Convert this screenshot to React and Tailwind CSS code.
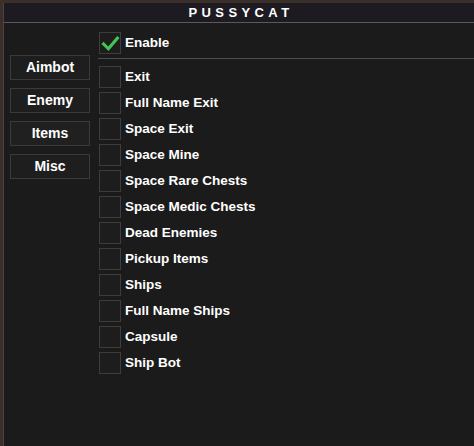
import React, { useState } from 'react';

const items = [
    'Exit',
    'Full Name Exit',
    'Space Exit',
    'Space Mine',
    'Space Rare Chests',
    'Space Medic Chests',
    'Dead Enemies',
    'Pickup Items',
    'Ships',
    'Full Name Ships',
    'Capsule',
    'Ship Bot',
];

const tabs = ['Aimbot', 'Enemy', 'Items', 'Misc'];

const Check = () => (
    <svg width="19" height="19" viewBox="0 0 18 18" fill="none">
        <path d="M2.5 9.5 L7 14 L15.5 4" stroke="#43c450" strokeWidth="3" strokeLinecap="square" />
    </svg>
);

const Box = ({ checked, onClick }) => (
    <button
        onClick={onClick}
        className="flex h-[22px] w-[22px] shrink-0 items-center justify-center border border-[#3d3d3d] bg-[#1d1d1d]"
    >
        {checked && <Check />}
    </button>
);

const App = () => {
    const [enabled, setEnabled] = useState(true);
    const [checked, setChecked] = useState({});
    const [tab, setTab] = useState('Items');

    return (
        <div
            className="h-[446px] w-[474px] overflow-hidden bg-[#3a3029] pl-[3px] pt-[3px]"
            style={{ fontFamily: '"Liberation Sans", Arial, sans-serif' }}
        >
            <div className="flex h-full flex-col border-l border-[#4a4440] bg-[#1b1b1b]">
                {/* title bar */}
                <div className="flex h-[20px] items-center justify-center border-b border-[#5a5a5a] bg-[#1e1a21]">
                    <span className="pl-[4px] text-[13px] font-bold tracking-[4.4px] text-white">PUSSYCAT</span>
                </div>

                <div className="flex flex-1">
                    {/* tabs */}
                    <div className="flex w-[94px] flex-col gap-[8px] pl-[6px] pt-[32px]">
                        {tabs.map((t) => (
                            <button
                                key={t}
                                onClick={() => setTab(t)}
                                className={`h-[25px] w-[80px] border border-[#3a3a3a] text-[14px] font-bold text-white ${
                                    tab === t ? 'bg-[#202020]' : 'bg-[#1e1e1e]'
                                }`}
                            >
                                {t}
                            </button>
                        ))}
                    </div>

                    {/* options */}
                    <div className="flex flex-1 flex-col pt-[9px]">
                        <div className="flex items-center gap-[4px] pl-[1px]">
                            <Box checked={enabled} onClick={() => setEnabled(!enabled)} />
                            <span className="text-[13.5px] font-bold text-white">Enable</span>
                        </div>
                        <div className="mt-[4px] h-px bg-[#4d4d4d]" />
                        <div className="flex flex-col gap-[4px] pl-[1px] pt-[7px]">
                            {items.map((name) => (
                                <div key={name} className="flex items-center gap-[4px]">
                                    <Box
                                        checked={!!checked[name]}
                                        onClick={() => setChecked({ ...checked, [name]: !checked[name] })}
                                    />
                                    <span className="text-[13.5px] font-bold text-white">{name}</span>
                                </div>
                            ))}
                        </div>
                    </div>
                </div>
            </div>
        </div>
    );
};

export default App;
